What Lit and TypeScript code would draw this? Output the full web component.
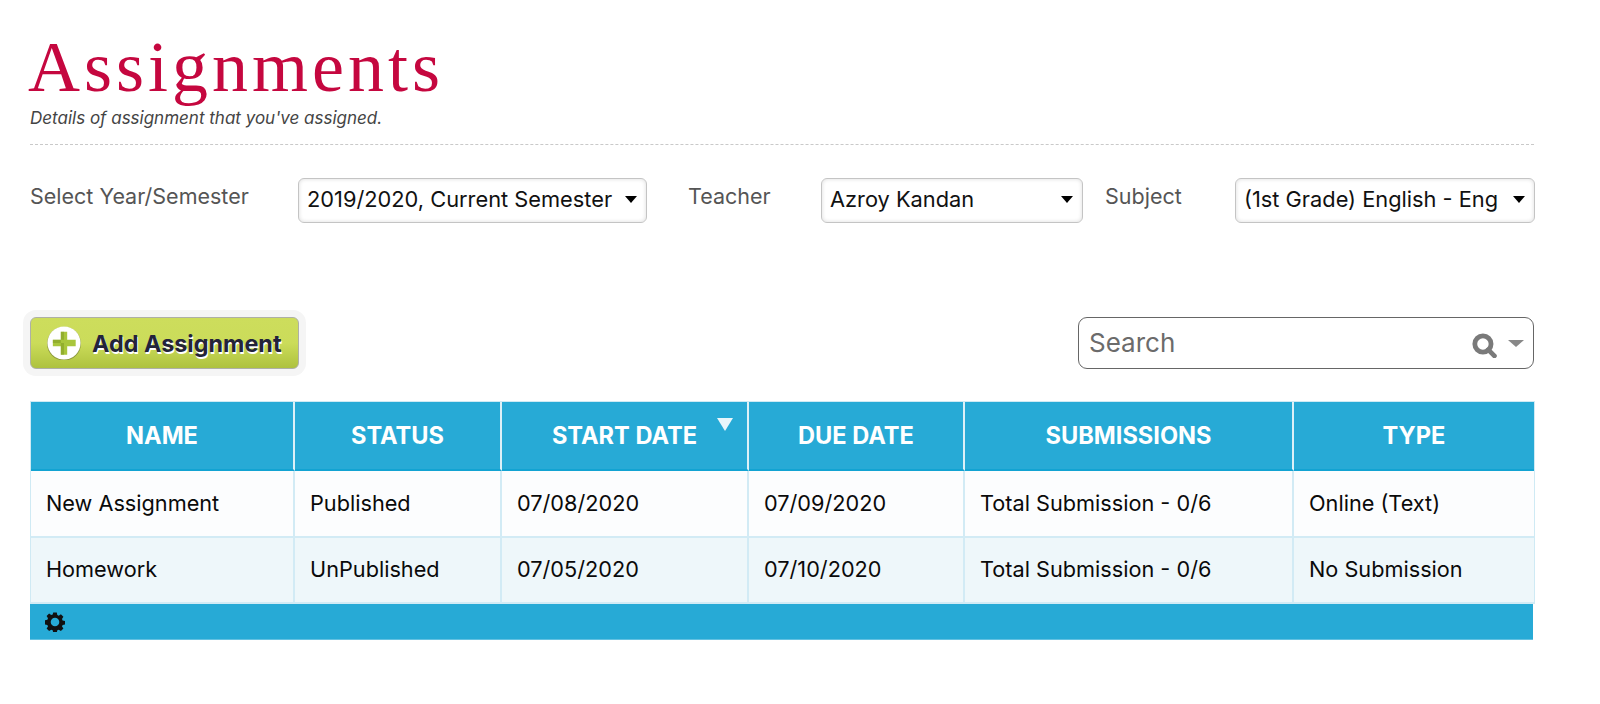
import { LitElement, html, css, svg } from "lit";
import { customElement } from "lit/decorators.js";

const COLS = [264, 207, 247, 216, 329, 240];
const HEAD = ["NAME", "STATUS", "START DATE", "DUE DATE", "SUBMISSIONS", "TYPE"];
const ROWS = [
  ["New Assignment", "Published", "07/08/2020", "07/09/2020", "Total Submission - 0/6", "Online (Text)"],
  ["Homework", "UnPublished", "07/05/2020", "07/10/2020", "Total Submission - 0/6", "No Submission"],
];

const gear = svg`<svg class="gear" viewBox="0 0 20 20" width="20" height="20" aria-hidden="true"><g fill="#111"><path fill-rule="evenodd" d="M8.2 0.6h3.6l.5 2.5 1.5.6 2.1-1.4 2.500 2.500-1.400 2.100.6 1.500 2.500.5v3.600l-2.500.5-.6 1.500 1.400 2.100-2.500 2.500-2.100-1.400-1.500.6-.5 2.500H8.200l-.5-2.500-1.500-.6-2.100 1.400-2.500-2.500 1.400-2.100-.6-1.500-2.500-.5V8.200l2.500-.5.6-1.500-1.400-2.100 2.500-2.500 2.100 1.400 1.500-.6zM10 5.700a4.300 4.300 0 1 0 0 8.600 4.300 4.300 0 0 0 0-8.600z"/></g></svg>`;

const plus = svg`<svg class="plus" viewBox="0 0 32 32" width="34" height="34" aria-hidden="true">
  <circle cx="16" cy="16.6" r="16" fill="#8d9a3c"/><circle cx="16" cy="16" r="15.6" fill="#fff"/>
  <path d="M13 5.500h6v7.500h8v6h-8v8h-6v-8H5.500v-6H13z" fill="#a9c63c"/>
  <path d="M13 5.500h3v7.500H5.500v3H13v11h3V16h-3z" fill="#7f9a22" opacity=".55"/>
</svg>`;

const lens = svg`<svg viewBox="0 0 24 24" width="25" height="25" aria-hidden="true"><circle cx="10.500" cy="10.500" r="7.800" fill="none" stroke="#7a7a7a" stroke-width="4.600"/><path d="M15.500 16l6 6" stroke="#7a7a7a" stroke-width="4.600" stroke-linecap="round"/></svg>`;

@customElement("app-root")
export class AppRoot extends LitElement {
  static styles = css`
    :host {
      display: block;
      box-sizing: border-box;
      height: 704px;
      overflow: hidden;
      padding: 0 66px 0 30px;
      background: #fff;
      font-family: "Inter", "Liberation Sans", sans-serif;
      color: #000;
    }
    h1 {
      margin: 0 0 0 -2px;
      padding-top: 29px;
      font-family: "Liberation Serif", serif;
      font-weight: 400;
      font-size: 72px;
      line-height: 76px;
      letter-spacing: 4px;
      color: #c5073f;
    }
    .sub {
      margin: 0;
      padding-top: 2px;
      height: 37px;
      font-size: 17px;
      line-height: 22px;
      font-style: italic;
      color: #444;
      border-bottom: 1px dashed #c9c9c9;
      box-sizing: content-box;
    }
    .filters {
      display: flex;
      align-items: flex-start;
      margin-top: 33px;
    }
    .lbl {
      font-size: 21.500px;
      line-height: 30px;
      color: #555;
      flex: none;
      padding-top: 3px;
    }
    .l1 { width: 268px; }
    .l2 { width: 133px; margin-left: 41px; }
    .l3 { width: 130px; margin-left: 22px; }
    .sel {
      flex: none;
      box-sizing: border-box;
      height: 45px;
      display: flex;
      align-items: center;
      justify-content: space-between;
      padding: 0 9px 3px 8px;
      border: 1px solid #c4c4c4;
      border-radius: 6px;
      background: #fff;
      box-shadow: inset 0 0 4px rgba(0, 0, 0, 0.14);
      font-size: 21.800px;
      white-space: nowrap;
      color: #111;
    }
    .s1 { width: 349px; }
    .s2 { width: 262px; }
    .s3 { width: 300px; }
    .tri {
      flex: none;
      width: 0;
      height: 0;
      border-left: 6.500px solid transparent;
      border-right: 6.500px solid transparent;
      border-top: 7px solid #000;
    }
    .toolbar {
      display: flex;
      justify-content: space-between;
      align-items: center;
      margin-top: 94px;
    }
    .add {
      box-sizing: border-box;
      width: 269px;
      height: 52px;
      display: flex;
      align-items: center;
      gap: 11px;
      padding: 0 0 0 16px;
      border: 1px solid #aeb0a6;
      border-radius: 6px;
      background: linear-gradient(#cddd5c 0, #cbdc5a 50%, #aec23e 100%);
      box-shadow: 0 0 0 7px #f5f5f5;
      font-size: 23.400px;
      font-weight: 700;
      color: #23233a;
      text-shadow: 1px 1.500px 0 #fff;
      white-space: nowrap;
    }
    .plus { flex: none; }
    .search {
      box-sizing: border-box;
      width: 456px;
      height: 52px;
      display: flex;
      align-items: center;
      padding: 0 9px 0 10px;
      border: 1px solid #666;
      border-radius: 9px;
      font-size: 26px;
      color: #6b6b6b;
    }
    .search span { flex: 1; margin-top: -2px; }
    .search svg { margin-right: 11px; margin-top: 4px; }
    .caret {
      width: 0;
      height: 0;
      border-left: 8px solid transparent;
      border-right: 8px solid transparent;
      border-top: 7px solid #888;
    }
    table {
      margin-top: 32px;
      width: 1503px;
      table-layout: fixed;
      border-collapse: separate;
      border-spacing: 0;
      border: 1px solid #cfeaf4;
      border-bottom: 0;
    }
    th {
      position: relative;
      height: 69px;
      box-sizing: border-box;
      padding: 0;
      background: #27aad6;
      color: #fff;
      font-size: 23.600px;
      font-weight: 700;
      text-align: center;
      border-right: 2px solid #dcf0f7;
      border-bottom: 2px solid #12a3d2;
    }
    th:last-child, td:last-child { border-right: 0; }
    td {
      height: 66px;
      box-sizing: border-box;
      padding: 0 0 0 15px;
      font-size: 21.700px;
      color: #0a0a0a;
      white-space: nowrap;
      border-right: 2px solid #d2ebf5;
      border-bottom: 2px solid #d2ebf5;
    }
    tr.a td { background: #fcfdfe; height: 67px; padding-bottom: 2px; }
    tr.b td { background: #eef7fa; padding-bottom: 2px; }
    .sort {
      position: absolute;
      top: 16px;
      right: 14px;
      width: 0;
      height: 0;
      border-left: 8px solid transparent;
      border-right: 8px solid transparent;
      border-top: 13px solid #e8f6fb;
    }
    .foot {
      box-sizing: border-box;
      width: 1503px;
      height: 36px;
      display: flex;
      align-items: center;
      padding: 0 0 0 15px;
      background: #27aad6;
      border-bottom: 1px solid #63c1e1;
    }
  `;

  render() {
    return html`
      <h1>Assignments</h1>
      <p class="sub">Details of assignment that you've assigned.</p>
      <div class="filters">
        <span class="lbl l1">Select Year/Semester</span>
        <div class="sel s1">2019/2020, Current Semester<i class="tri"></i></div>
        <span class="lbl l2">Teacher</span>
        <div class="sel s2">Azroy Kandan<i class="tri"></i></div>
        <span class="lbl l3">Subject</span>
        <div class="sel s3">(1st Grade) English - Eng<i class="tri"></i></div>
      </div>
      <div class="toolbar">
        <div class="add">${plus}Add Assignment</div>
        <div class="search"><span>Search</span>${lens}<i class="caret"></i></div>
      </div>
      <table>
        <colgroup>${COLS.map((w) => html`<col style="width:${w}px" />`)}</colgroup>
        <thead>
          <tr>
            ${HEAD.map(
              (h, i) => html`<th>${h}${i === 2 ? html`<i class="sort"></i>` : ""}</th>`
            )}
          </tr>
        </thead>
        <tbody>
          ${ROWS.map(
            (r, i) => html`<tr class=${i ? "b" : "a"}>${r.map((c) => html`<td>${c}</td>`)}</tr>`
          )}
        </tbody>
      </table>
      <div class="foot">${gear}</div>
    `;
  }
}
